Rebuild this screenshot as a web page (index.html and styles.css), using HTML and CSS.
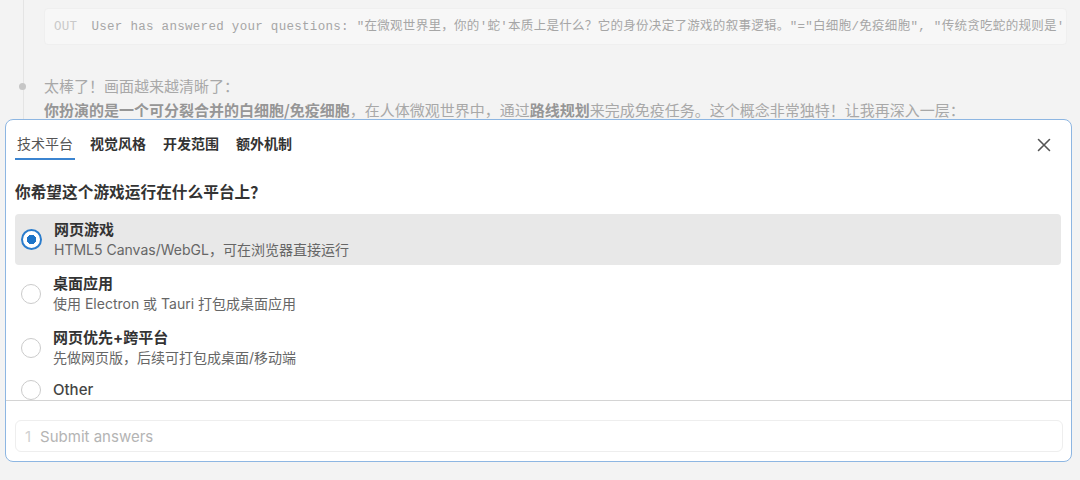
FILE: index.html
```html
<!DOCTYPE html>
<html lang="zh-CN">
<head>
    <meta charset="UTF-8">
    <meta name="viewport" content="width=device-width, initial-scale=1.0">
    <title>Questions</title>
    <link rel="stylesheet" href="styles.css">
</head>
<body>
    <div class="chat">
        <div class="timeline">
            <div class="tool-out">
                <span class="out-label">OUT</span>
                <span class="out-text">User has answered your questions: "在微观世界里，你的'蛇'本质上是什么？它的身份决定了游戏的叙事逻辑。"="白细胞/免疫细胞", "传统贪吃蛇的规则是'</span>
            </div>
            <div class="message">
                <span class="dot"></span>
                <p>太棒了！画面越来越清晰了：</p>
                <p><b>你扮演的是一个可分裂合并的白细胞/免疫细胞</b>，在人体微观世界中，通过<b>路线规划</b>来完成免疫任务。这个概念非常独特！让我再深入一层：</p>
            </div>
        </div>
    </div>

    <div class="panel">
        <div class="panel-header">
            <div class="tabs">
                <button class="tab active">技术平台</button>
                <button class="tab">视觉风格</button>
                <button class="tab">开发范围</button>
                <button class="tab">额外机制</button>
            </div>
            <button class="close-btn" aria-label="Close">
                <svg width="14" height="14" viewBox="0 0 14 14">
                    <path d="M1.5 1.5 L12.5 12.5 M12.5 1.5 L1.5 12.5" stroke="#555" stroke-width="1.6" stroke-linecap="round"/>
                </svg>
            </button>
        </div>

        <div class="panel-body">
            <h3 class="question">你希望这个游戏运行在什么平台上？</h3>
            <div class="options">
                <div class="option selected">
                    <span class="radio"></span>
                    <div class="option-text">
                        <div class="option-title">网页游戏</div>
                        <div class="option-desc">HTML5 Canvas/WebGL，可在浏览器直接运行</div>
                    </div>
                </div>
                <div class="option">
                    <span class="radio"></span>
                    <div class="option-text">
                        <div class="option-title">桌面应用</div>
                        <div class="option-desc">使用 Electron 或 Tauri 打包成桌面应用</div>
                    </div>
                </div>
                <div class="option">
                    <span class="radio"></span>
                    <div class="option-text">
                        <div class="option-title">网页优先+跨平台</div>
                        <div class="option-desc">先做网页版，后续可打包成桌面/移动端</div>
                    </div>
                </div>
                <div class="option single">
                    <span class="radio"></span>
                    <div class="option-text">
                        <div class="option-title">Other</div>
                    </div>
                </div>
            </div>
        </div>

        <div class="panel-footer">
            <div class="submit-box">
                <span class="line-no">1</span>
                <span class="submit-text">Submit answers</span>
            </div>
        </div>
    </div>
</body>
</html>
```

FILE: styles.css
```css
body {
    margin: 0;
    padding: 0;
    background-color: #f3f3f3;
    font-family: "Inter", "Noto Sans CJK SC", sans-serif;
    color: #333;
}

/* Chat history behind the panel */
.chat {
    height: 119px;
    overflow: hidden;
}
.timeline {
    margin-left: 23px;
    border-left: 1px solid #e4e4e4;
    padding: 8px 13px 0 20px;
    height: 200px;
}
.tool-out {
    height: 35px;
    display: flex;
    align-items: center;
    gap: 14px;
    padding: 1px 9px 0 9px;
    box-sizing: border-box;
    height: 37px;
    background-color: #f7f7f7;
    border: 1px solid #efefef;
    border-radius: 4px;
    font-family: "Liberation Mono", "Noto Sans CJK SC", monospace;
    font-size: 12.5px;
    letter-spacing: 0.3px;
    line-height: 16px;
    white-space: nowrap;
    overflow: hidden;
}
.out-label {
    color: #c9c9c9;
}
.out-text {
    color: #a6a6a6;
}
.message {
    position: relative;
    margin-top: 29px;
    font-family: "Noto Sans CJK SC", sans-serif;
    font-size: 15px;
    line-height: 24px;
    color: #a8a8a8;
}
.message p {
    margin: 0;
}
.message b {
    color: #969696;
    font-weight: 700;
}
.dot {
    position: absolute;
    left: -25px;
    top: 9px;
    width: 7px;
    height: 7px;
    border-radius: 50%;
    background-color: #c6c6c6;
}

/* Question panel */
.panel {
    margin-left: 5px;
    width: 1065px;
    background: #fff;
    border: 1px solid #8db6e2;
    border-radius: 8px;
}
.panel-header {
    display: flex;
    justify-content: space-between;
    align-items: flex-start;
    padding: 12px 0 0 9px;
}
.tabs {
    display: flex;
    gap: 13px;
}
.tab {
    background: none;
    border: none;
    padding: 1px 2px 5px 2px;
    border-bottom: 2px solid transparent;
    font-family: "Noto Sans CJK SC", sans-serif;
    font-size: 14px;
    line-height: 20px;
    font-weight: 700;
    color: #333;
    cursor: pointer;
}
.tab.active {
    font-weight: 400;
    color: #555;
    border-bottom-color: #3b84d0;
}
.close-btn {
    background: none;
    border: none;
    padding: 0;
    margin: 6px 20px 0 0;
    width: 14px;
    height: 14px;
    cursor: pointer;
}

.panel-body {
    height: 240px;
    overflow: hidden;
    border-bottom: 1px solid #d4d4d4;
    padding: 0 10px 0 9px;
}
.question {
    margin: 21px 0 11px 0;
    font-family: "Noto Sans CJK SC", sans-serif;
    font-size: 15.7px;
    line-height: 22px;
    font-weight: 700;
    color: #333;
}
.options {
    display: flex;
    flex-direction: column;
    gap: 3px;
}
.option {
    display: flex;
    align-items: center;
    gap: 12px;
    padding: 6px 6px 5px 6px;
    border-radius: 4px;
}
.option.selected {
    background-color: #e8e8e8;
}
.option.single {
    padding-top: 4px;
}
.radio {
    flex: none;
    width: 18px;
    height: 18px;
    border: 1.5px solid #cbcbcb;
    border-radius: 50%;
    background: #fff;
    box-sizing: content-box;
    margin-top: -1px;
}
.option.selected .radio {
    width: 17px;
    height: 17px;
    border: 2px solid #2a7ccc;
    background: radial-gradient(circle, #1d74c8 0, #1d74c8 4.5px, #fff 5px);
}
.option-title {
    font-size: 15px;
    line-height: 20px;
    font-weight: 700;
    color: #333;
}
.option.single .option-title {
    font-weight: 500;
    color: #444;
}
.option-desc {
    font-size: 14px;
    line-height: 20px;
    color: #666;
}

.panel-footer {
    padding: 19px 8px 9px 9px;
}
.submit-box {
    height: 30px;
    display: flex;
    align-items: center;
    gap: 9px;
    padding: 0 9px;
    border: 1px solid #eeeeee;
    border-radius: 6px;
    font-size: 15px;
}
.line-no {
    color: #d0d0d0;
}
.submit-text {
    color: #b4b4b4;
}
```
